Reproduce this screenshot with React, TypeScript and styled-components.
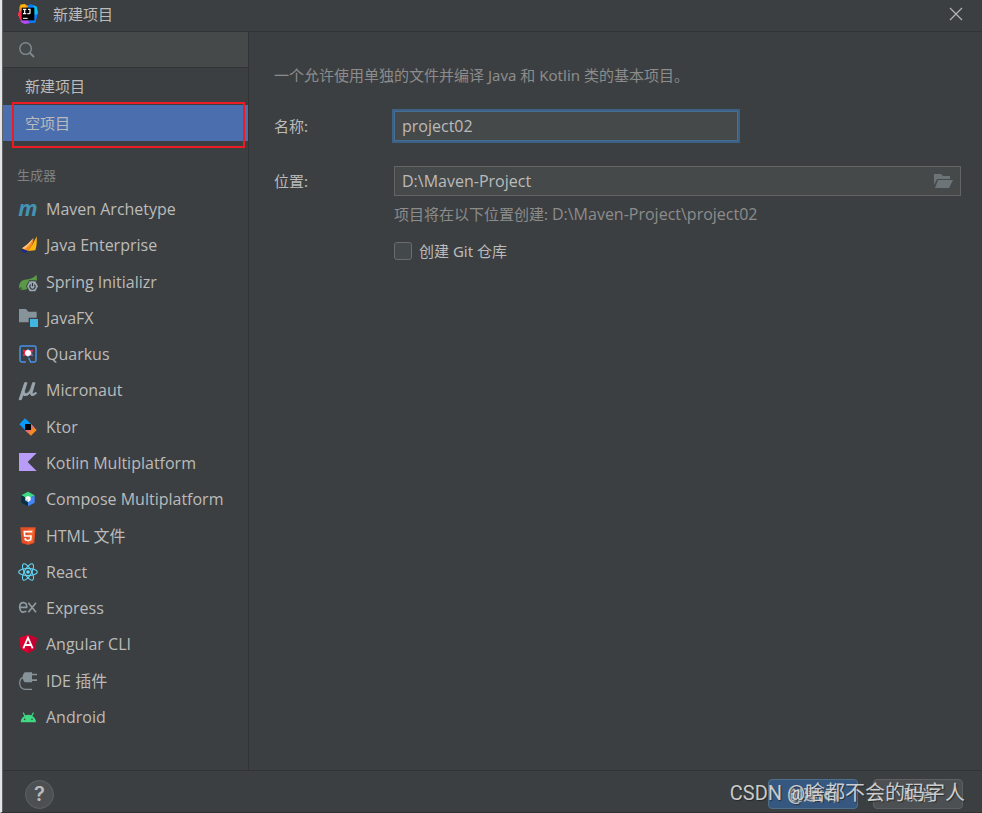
import React from "react";
import styled, { createGlobalStyle, css } from "styled-components";

const colors = {
  panel: "#3c3f41",
  field: "#45494a",
  line: "#323334",
  text: "#bbbbbb",
  muted: "#8c8c8c",
  select: "#4b6eaf",
  marker: "#ed1c24",
};

const latinFont = `"Open Sans", "Noto Sans CJK SC", sans-serif`;

const GlobalStyle = createGlobalStyle`
  *, *::before, *::after { box-sizing: border-box; }
  body {
    margin: 0;
    background: ${colors.panel};
    color: ${colors.text};
    font-family: "Noto Sans", "Noto Sans CJK SC", sans-serif;
    font-size: 15px;
    line-height: 20px;
  }
  button, input { font: inherit; color: inherit; }
`;

const Dialog = styled.div`
  display: flex;
  flex-direction: column;
  min-height: 100vh;
  border-left: 2px solid #e4e4e4;
  border-bottom: 1px solid #2f3132;
  box-shadow: inset 1px 0 #616466;
  padding-left: 1px;
  position: relative;
`;

const TitleBar = styled.header`
  display: flex;
  align-items: center;
  height: 32px;
  padding: 0 19px 3px 15px;
  border-bottom: 1px solid ${colors.line};
`;

const Title = styled.h1`
  flex: 1;
  margin: 0 0 0 15px;
  font-size: 15px;
  font-weight: 400;
`;

const IconButton = styled.button`
  display: flex;
  padding: 0;
  border: 0;
  background: none;
`;

const Body = styled.div`
  display: flex;
  flex: 1;
`;

const Sidebar = styled.nav`
  display: flex;
  flex-direction: column;
  width: 246px;
  flex-shrink: 0;
  border-right: 1px solid ${colors.line};
  padding-bottom: 35px;
`;

const SearchBar = styled.label`
  display: flex;
  align-items: center;
  gap: 8px;
  height: 36px;
  padding-left: 15px;
  background: ${colors.field};
  border-bottom: 1px solid ${colors.line};
`;

const SearchInput = styled.input`
  flex: 1;
  min-width: 0;
  border: 0;
  outline: 0;
  background: transparent;
`;

const TypeSlot = styled.div`
  position: relative;
  margin-top: 1px;
`;

const TypeButton = styled.button<{ $selected?: boolean }>`
  display: block;
  width: 100%;
  height: 36px;
  padding: 0 0 0 22px;
  border: 0;
  text-align: left;
  background: ${(p) => (p.$selected ? colors.select : "transparent")};
`;

const Marker = styled.div`
  position: absolute;
  inset: -3px 0 -7px 9px;
  right: 3px;
  border: 2px solid ${colors.marker};
  pointer-events: none;
`;

const GroupTitle = styled.h2`
  margin: 24px 0 6px;
  padding-left: 14px;
  font-size: 13px;
  line-height: 20px;
  font-weight: 400;
  color: #7f8182;
`;

const GeneratorList = styled.ul`
  display: grid;
  grid-auto-rows: 1fr;
  flex: 1;
  margin: 0;
  padding: 0;
  list-style: none;
`;

const GeneratorButton = styled.button`
  display: flex;
  align-items: center;
  gap: 8px;
  width: 100%;
  height: 100%;
  min-height: 32px;
  padding: 0 0 0 15px;
  border: 0;
  background: none;
  text-align: left;
  font-family: ${latinFont};
  font-size: 16px;
`;

const Main = styled.main`
  flex: 1;
  padding: 33px 21px 20px 25px;
`;

const Description = styled.p`
  margin: 0 0 26px;
  color: ${colors.muted};
`;

const Form = styled.form`
  display: grid;
  grid-template-columns: 120px 1fr;
  align-items: center;
`;

const fieldBox = css`
  display: flex;
  align-items: center;
  height: 30px;
  background: ${colors.field};
  border: 1px solid #646464;
  font-family: ${latinFont};
  font-size: 16px;
`;

const NameInput = styled.input`
  ${fieldBox}
  width: 100%;
  max-width: 344px;
  padding: 0 7px;
  border-color: #466d94;
  outline: 2px solid #3d6185;
`;

const LocationField = styled.div`
  ${fieldBox}
  margin-top: 25px;
  padding: 0 7px;
`;

const LocationInput = styled.input`
  flex: 1;
  min-width: 0;
  padding: 0;
  border: 0;
  outline: 0;
  background: transparent;
`;

const FieldLabel = styled.label<{ $spaced?: boolean }>`
  margin-top: ${(p) => (p.$spaced ? "25px" : "0")};
`;

const Hint = styled.p`
  grid-column: 2;
  margin: 8px 0 17px;
  color: ${colors.muted};
`;

const HintPath = styled.span`
  font-family: ${latinFont};
  font-size: 16px;
`;

const CheckLabel = styled.label`
  grid-column: 2;
  display: flex;
  align-items: center;
  gap: 7px;
`;

const CheckBox = styled.input`
  appearance: none;
  width: 18px;
  height: 18px;
  margin: 0;
  border: 1px solid #6b6b6b;
  border-radius: 3px;
  background: #43494a;
`;

const Footer = styled.footer`
  display: flex;
  align-items: center;
  gap: 15px;
  height: 42px;
  padding: 5px 19px 0 22px;
  border-top: 1px solid ${colors.line};
`;

const HelpButton = styled.button`
  width: 29px;
  height: 29px;
  margin-right: auto;
  padding: 0;
  border: 1px solid #5e6263;
  border-radius: 50%;
  background: #4c5052;
  font-family: Inter, sans-serif;
  font-size: 20px;
  font-weight: 600;
`;

const ActionButton = styled.button<{ $primary?: boolean }>`
  width: 90px;
  height: 30px;
  padding: 0;
  border: 1px solid ${(p) => (p.$primary ? "#4c708c" : "#5e6060")};
  border-radius: 4px;
  background: ${(p) => (p.$primary ? "#365880" : "#4c5052")};
  font-weight: ${(p) => (p.$primary ? 700 : 400)};
`;

const Watermark = styled.div`
  position: absolute;
  right: 17px;
  bottom: 5px;
  font-family: Roboto, "Noto Sans CJK SC", sans-serif;
  font-size: 20px;
  line-height: 28px;
  white-space: nowrap;
  color: rgba(225, 225, 225, 0.88);
  text-shadow: 1px 1px 1px rgba(30, 30, 30, 0.7);
  pointer-events: none;
`;

const Glyph = styled.svg.attrs({
  width: 20,
  height: 20,
  viewBox: "0 0 60 60",
  "aria-hidden": true,
})`
  flex-shrink: 0;
  overflow: visible;
`;

const IdeaLogo = () => (
  <Glyph>
    <path d="M4 8 20 0 32 6 24 32 0 36 4 24Z" fill="#fc801d" />
    <path d="M6 2 20 0 26 8 10 22Z" fill="#fdb60d" />
    <path d="M0 26 14 18 20 52 6 48 2 36Z" fill="#fe2857" />
    <path d="M28 4 40 1 56 8 60 28 52 56 30 58 38 24Z" fill="#087cfa" />
    <path d="M46 4 56 8 60 28 50 34Z" fill="#07c3f2" />
    <path d="M10 40 30 46 34 58 20 60 8 54Z" fill="#b74af7" />
    <rect x="11" y="11" width="38" height="38" fill="#000" />
    <path d="M15 16H25M20 16V29M15 29H25M30 16H36V26Q36 30 28 29" fill="none" stroke="#fff" strokeWidth="3.6" />
    <path d="M15 43H29" stroke="#fff" strokeWidth="3" />
  </Glyph>
);

const CloseIcon = () => (
  <svg width="14" height="14" viewBox="0 0 14 14" aria-hidden="true">
    <path d="M1 1 13 13M13 1 1 13" stroke="#b4b4b4" strokeWidth="1.2" />
  </svg>
);

const SearchIcon = () => (
  <svg width="18" height="18" viewBox="0 0 18 18" aria-hidden="true">
    <circle cx="7.6" cy="7.6" r="5.8" fill="none" stroke="#7f8b91" strokeWidth="1.4" />
    <path d="M12 12 16 16" stroke="#7f8b91" strokeWidth="1.8" />
  </svg>
);

const FolderIcon = () => (
  <svg width="20" height="16" viewBox="0 0 20 16" aria-hidden="true">
    <path d="M1 1H8L10 3H17V6H4L1 12Z" fill="#6d7478" />
    <path d="M5 7H20L16 15H2Z" fill="#6d7478" />
  </svg>
);

const MavenIcon = () => (
  <Glyph>
    <text x="1" y="50" fontFamily="Open Sans, sans-serif" fontSize="64" fontWeight="700" fontStyle="italic" fill="#4394b4">
      m
    </text>
  </Glyph>
);

const JavaEnterpriseIcon = () => (
  <Glyph>
    <path d="M56 4Q58 30 52 46L30 48Q46 28 56 4Z" fill="#fdb60d" />
    <path d="M47 9Q46 32 29 48L12 40Q36 28 47 9Z" fill="#f98b1c" />
    <path d="M46 9Q30 28 12 40L20 43Q40 26 46 9Z" fill="#ffc27a" />
    <path d="M8 41 31 49 21 54Q11 51 8 41Z" fill="#1b2a8c" />
  </Glyph>
);

const SpringIcon = () => (
  <Glyph>
    <path d="M55 8Q59 20 56 27L52 25H34L24 43 28 50Q18 55 8 53Q0 45 5 35Q9 25 20 23Q44 22 55 8Z" fill="#5a9a46" />
    <circle cx="9" cy="49" r="3" fill="#3c5c35" />
    <path d="M35 28H52L60 43 52 58H35L27 43Z" fill="#9aa7b0" />
    <path d="M38 38A8 8 0 1 0 49 38M43.500 33V43" fill="none" stroke="#303638" strokeWidth="3.4" />
  </Glyph>
);

const JavaFxIcon = () => (
  <Glyph>
    <path d="M3 3H24L31 11H56V29H32V43H3Z" fill="#87939a" />
    <rect x="36" y="33" width="24" height="24" fill="#40b6e0" />
  </Glyph>
);

const QuarkusIcon = () => (
  <Glyph>
    <path d="M24 54H11Q6 54 6 49V11Q6 6 11 6H49Q54 6 54 11V49Q54 54 49 54H38L32 42" fill="none" stroke="#4791e8" strokeWidth="4.5" />
    <path d="M30 13 35 20 45 17 42 27 45 37 35 34 30 41 25 34 15 37 18 27 15 17 25 20Z" fill="#4791e8" />
    <path d="M15 17 26 19 30 27 18 27ZM45 17 42 27H30L34 19ZM15 37 18 28 30 27 25 34ZM45 37 34 34 30 27Z" fill="#ff2050" />
    <circle cx="30" cy="27" r="9" fill="#fff" />
  </Glyph>
);

const MicronautIcon = () => (
  <Glyph>
    <path d="M20 8H27L20 31Q17 41 24 41Q33 40 38 27L44 8H51L43 37Q42 42 46 41L54 37 56 40Q49 47 42 47Q36 47 38 37Q30 48 21 47Q17 47 15 44L10 59H3Z" fill="#9aa7b0" stroke="#9aa7b0" strokeWidth="2.5" />
  </Glyph>
);

const KtorIcon = () => (
  <Glyph>
    <path d="M21 4 39 21 21 39 4 22Z" fill="#079cfc" />
    <path d="M39 21 56 39 39 56 21 39Z" fill="#f68722" />
    <path d="M39 21 48 30 30 48 21 39Z" fill="#dd6d82" />
    <rect x="21" y="21" width="18" height="18" fill="#000" />
  </Glyph>
);

const KotlinIcon = () => (
  <Glyph>
    <path d="M3 0H56L29 27 56 54H3Z" fill="#b99bf8" />
  </Glyph>
);

const ComposeIcon = () => (
  <Glyph>
    <path d="M30 8 50 19 30 30 10 19Z" fill="#3ddc84" />
    <path d="M10 19 30 30V52L10 41Z" fill="#083042" />
    <path d="M50 19 30 30V52L50 41Z" fill="#4285f4" />
    <path d="M22 25 30 21 38 25V34L30 39 22 34Z" fill="#fff" />
    <path d="M22 34 30 30V39Z" fill="#a9c5d8" />
  </Glyph>
);

const HtmlIcon = () => (
  <Glyph>
    <path d="M7 4H53L49 51 30 57 11 51Z" fill="#e44d26" />
    <path d="M30 8H49L45 48 30 53Z" fill="#f16529" />
    <path d="M43 17H19L20 30H39L38 41 30 44 22 41V36" fill="none" stroke="#fff" strokeWidth="5" />
  </Glyph>
);

const ReactIcon = () => (
  <Glyph>
    <g fill="none" stroke="#61dafb" strokeWidth="3.2">
      <ellipse cx="30" cy="30" rx="28" ry="10.5" />
      <ellipse cx="30" cy="30" rx="28" ry="10.5" transform="rotate(60 30 30)" />
      <ellipse cx="30" cy="30" rx="28" ry="10.5" transform="rotate(120 30 30)" />
    </g>
    <circle cx="30" cy="30" r="5.5" fill="#61dafb" />
  </Glyph>
);

const ExpressIcon = () => (
  <Glyph>
    <path d="M25 40Q6 48 5 28Q5 14 16 14Q27 14 26 28H5M31 14 54 43M54 14 31 43" fill="none" stroke="#8f9ba2" strokeWidth="5" />
  </Glyph>
);

const AngularIcon = () => (
  <Glyph>
    <path d="M30 2 56 11 52 45 30 58 8 45 4 11Z" fill="#dd0031" />
    <path d="M30 2 56 11 52 45 30 58Z" fill="#c3002f" />
    <path d="M16 43 30 11 44 43M21 33H39" fill="none" stroke="#fff" strokeWidth="5.5" />
  </Glyph>
);

const PluginIcon = () => (
  <Glyph>
    <path d="M20 4H42V34H20Q14 28 14 19Q14 10 20 4ZM42 8H57V13H42ZM42 25H57V30H42Z" fill="#87939a" />
    <path d="M16 19Q5 22 5 36Q6 55 23 55H42" fill="none" stroke="#87939a" strokeWidth="3.5" />
  </Glyph>
);

const AndroidIcon = () => (
  <Glyph>
    <path d="M8 46Q9 33 19 27L14 18 17 16 22 25Q31 21 40 25L45 16 48 18 43 27Q53 33 54 46Z" fill="#3ddc84" />
    <circle cx="20" cy="37" r="2.5" fill="#3c3f41" />
    <circle cx="42" cy="37" r="2.5" fill="#3c3f41" />
  </Glyph>
);

const generators: { name: string; Icon: React.FC }[] = [
  { name: "Maven Archetype", Icon: MavenIcon },
  { name: "Java Enterprise", Icon: JavaEnterpriseIcon },
  { name: "Spring Initializr", Icon: SpringIcon },
  { name: "JavaFX", Icon: JavaFxIcon },
  { name: "Quarkus", Icon: QuarkusIcon },
  { name: "Micronaut", Icon: MicronautIcon },
  { name: "Ktor", Icon: KtorIcon },
  { name: "Kotlin Multiplatform", Icon: KotlinIcon },
  { name: "Compose Multiplatform", Icon: ComposeIcon },
  { name: "HTML 文件", Icon: HtmlIcon },
  { name: "React", Icon: ReactIcon },
  { name: "Express", Icon: ExpressIcon },
  { name: "Angular CLI", Icon: AngularIcon },
  { name: "IDE 插件", Icon: PluginIcon },
  { name: "Android", Icon: AndroidIcon },
];

export default function App() {
  return (
    <>
      <GlobalStyle />
      <Dialog>
        <TitleBar>
          <IdeaLogo />
          <Title>新建项目</Title>
          <IconButton type="button" aria-label="关闭">
            <CloseIcon />
          </IconButton>
        </TitleBar>
        <Body>
          <Sidebar>
            <SearchBar>
              <SearchIcon />
              <SearchInput type="text" aria-label="搜索" />
            </SearchBar>
            <TypeButton type="button">新建项目</TypeButton>
            <TypeSlot>
              <TypeButton type="button" $selected>
                空项目
              </TypeButton>
              <Marker />
            </TypeSlot>
            <GroupTitle>生成器</GroupTitle>
            <GeneratorList>
              {generators.map(({ name, Icon }) => (
                <li key={name}>
                  <GeneratorButton type="button">
                    <Icon />
                    {name}
                  </GeneratorButton>
                </li>
              ))}
            </GeneratorList>
          </Sidebar>
          <Main>
            <Description>一个允许使用单独的文件并编译 Java 和 Kotlin 类的基本项目。</Description>
            <Form>
              <FieldLabel htmlFor="name">名称:</FieldLabel>
              <NameInput id="name" type="text" defaultValue="project02" />
              <FieldLabel htmlFor="location" $spaced>
                位置:
              </FieldLabel>
              <LocationField>
                <LocationInput id="location" type="text" defaultValue="D:\Maven-Project" />
                <IconButton type="button" aria-label="浏览">
                  <FolderIcon />
                </IconButton>
              </LocationField>
              <Hint>
                项目将在以下位置创建: <HintPath>D:\Maven-Project\project02</HintPath>
              </Hint>
              <CheckLabel>
                <CheckBox type="checkbox" />
                创建 Git 仓库
              </CheckLabel>
            </Form>
          </Main>
        </Body>
        <Footer>
          <HelpButton type="button" aria-label="帮助">
            ?
          </HelpButton>
          <ActionButton type="button" $primary>
            创建(C)
          </ActionButton>
          <ActionButton type="button">取消</ActionButton>
        </Footer>
        <Watermark>CSDN @啥都不会的码字人</Watermark>
      </Dialog>
    </>
  );
}
